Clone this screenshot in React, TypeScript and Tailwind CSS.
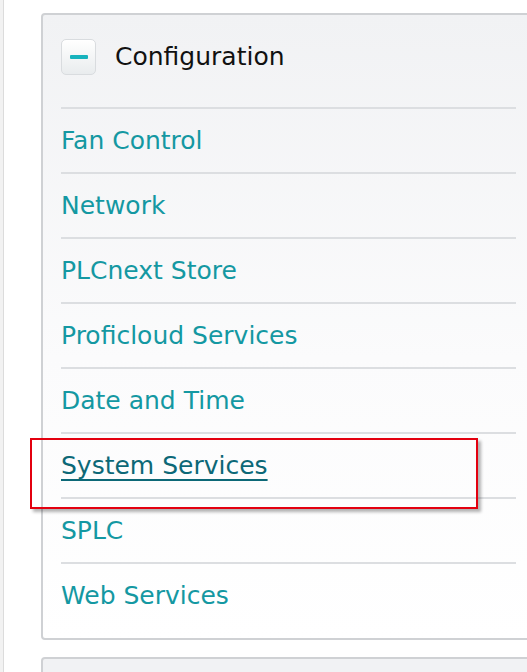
const items = [
  "Fan Control",
  "Network",
  "PLCnext Store",
  "Proficloud Services",
  "Date and Time",
  "System Services",
  "SPLC",
  "Web Services",
];

const MinusButton = () => (
  <div className="flex h-[36px] w-[35px] items-center justify-center rounded-[5px] border border-[#d9dcdf] bg-gradient-to-b from-white to-[#e9ecee] shadow-[inset_0_1px_0_#fff]">
    <div className="h-[4px] w-[18px] rounded-[1px] bg-[#17b3bd]" />
  </div>
);

export default function App() {
  return (
    <div
      className="flex min-h-[672px] w-[527px] overflow-hidden bg-white"
      style={{ fontFamily: '"DejaVu Sans", Verdana, sans-serif' }}
    >
      <div className="w-[4px] shrink-0 border-r border-[#dcdcdc] bg-[#f2f2f2]" />
      <div className="flex shrink-0 flex-col pl-[37px] pt-[13px]">
        <div className="relative w-[495px] rounded-[4px] border-2 border-[#cfd1d4] bg-gradient-to-b from-[#f1f2f4] via-[#fbfbfc] via-55% to-white px-[18px] pb-[11px]">
          <div className="flex h-[92px] items-center gap-[19px] pb-[8px]">
            <MinusButton />
            <span className="text-[25px] text-[#111]">Configuration</span>
          </div>
          {items.map((item) => (
            <div key={item} className="border-t-2 border-[#dcdee1]">
              <div className="flex h-[63px] items-center">
                {item === "System Services" ? (
                  <a className="text-[25px] text-[#0c6877] underline decoration-[2px] underline-offset-[5px]">
                    {item}
                  </a>
                ) : (
                  <span className="text-[25px] text-[#1498a2]">{item}</span>
                )}
              </div>
            </div>
          ))}
          <div className="absolute left-[-13px] top-[423px] h-[71px] w-[448px] border-2 border-[#e3000f] shadow-[3px_3px_3px_rgba(0,0,0,0.3)]" />
        </div>
        <div className="mt-[17px] h-[40px] w-[495px] rounded-t-[4px] border-2 border-b-0 border-[#cfd1d4] bg-[#f1f2f4]" />
      </div>
    </div>
  );
}
